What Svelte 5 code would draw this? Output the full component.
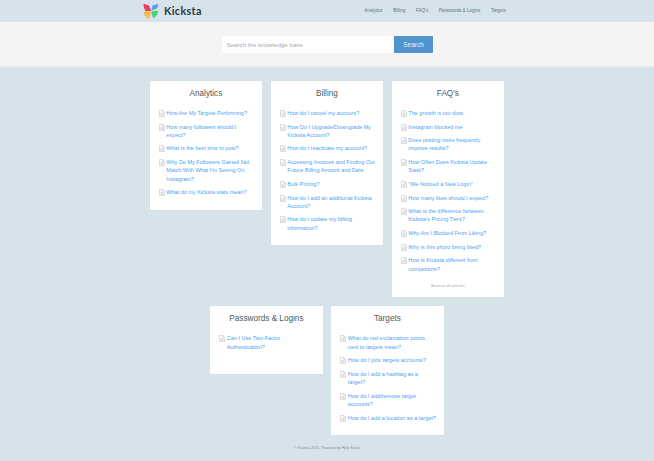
<script>
	const cards = [
		{
			title: 'Analytics',
			items: [
				'How Are My Targets Performing?',
				'How many followers should I expect?',
				'What is the best time to post?',
				"Why Do My Followers Gained Not Match With What I'm Seeing On Instagram?",
				'What do my Kicksta stats mean?'
			]
		},
		{
			title: 'Billing',
			items: [
				'How do I cancel my account?',
				'How Do I Upgrade/Downgrade My Kicksta Account?',
				'How do I reactivate my account?',
				'Accessing Invoices and Finding Out Future Billing Amount and Date',
				'Bulk Pricing?',
				'How do I add an additional Kicksta Account?',
				'How do I update my billing information?'
			]
		},
		{
			title: "FAQ's",
			more: true,
			items: [
				'The growth is too slow.',
				'Instagram blocked me',
				'Does posting more frequently improve results?',
				'How Often Does Kicksta Update Stats?',
				'"We Noticed a New Login"',
				'How many likes should I expect?',
				"What is the difference between Kicksta's Pricing Tiers?",
				'Why Am I Blocked From Liking?',
				'Why is this photo being liked?',
				'How is Kicksta different from competitors?'
			]
		},
		{
			title: 'Passwords & Logins',
			items: ['Can I Use Two-Factor Authentication?'],
			tall: true
		},
		{
			title: 'Targets',
			items: [
				'What do red exclamation points next to targets mean?',
				'How do I pick targets accounts?',
				'How do I add a hashtag as a target?',
				'How do I add/remove target accounts?',
				'How do I add a location as a target?'
			]
		}
	];

	const nav = ['Analytics', 'Billing', "FAQ's", 'Passwords & Logins', 'Targets'];
</script>

<header class="top">
	<div class="top-inner">
		<a class="brand" href="#top">
			<svg width="16" height="16" viewBox="0 0 16 16" aria-hidden="true">
				<path d="M0.5 0.8 L6 2.4 L8.4 8 L2.6 8 C1.2 6 0.5 3.6 0.5 0.8Z" fill="#e8415f" />
				<path d="M15.2 1 L9.6 2.2 L8.4 7.6 L14 5.6 C14.8 4.2 15.2 2.6 15.2 1Z" fill="#5b9bf0" />
				<path d="M0.6 8.4 L7.8 8.4 C7.8 11 7 13.6 5.6 15.6 C2.8 14.6 0.9 11.8 0.6 8.4Z" fill="#f7bb45" />
				<path d="M8.4 8.2 L15.2 7.8 C15 11 13.4 13.8 10.6 15.2 C9.2 13.2 8.4 10.8 8.4 8.2Z" fill="#4fd07a" />
			</svg>
			<span class="brand-name">Kicksta</span>
		</a>
		<nav>
			{#each nav as n}
				<a href="#top">{n}</a>
			{/each}
		</nav>
	</div>
</header>

<section class="search">
	<input type="text" placeholder="Search the knowledge base" />
	<button>Search</button>
</section>

<main class="cards">
	{#each cards as c}
		<article class="card" class:tall={c.tall}>
			<h2>{c.title}</h2>
			<ul>
				{#each c.items as item}
					<li>
						<svg class="doc" width="6" height="7" viewBox="0 0 6 7" aria-hidden="true">
							<path d="M0.5 0.5H3.8L5.5 2.2V6.5H0.5Z M3.8 0.5V2.2H5.5 M1.5 3.3H4.5 M1.5 4.3H4.5 M1.5 5.3H4.5" fill="none" stroke="#c4c4c4" stroke-width="0.6" />
						</svg>
						<a href="#top">{item}</a>
					</li>
				{/each}
			</ul>
			{#if c.more}
				<a class="more" href="#top">Browse all articles</a>
			{/if}
		</article>
	{/each}
</main>

<footer>© Kicksta 2021. Powered by Help Scout</footer>

<style>
	:global(body) {
		margin: 0;
		background: #d6e3ea;
		font-family: 'Liberation Sans', Arial, sans-serif;
	}
	a {
		text-decoration: none;
	}
	.top {
		height: 22px;
	}
	.top-inner {
		width: 363px;
		margin-left: 143px;
		height: 22px;
		display: flex;
		justify-content: space-between;
		align-items: center;
		padding-bottom: 1px;
		box-sizing: border-box;
	}
	.brand {
		display: flex;
		align-items: center;
		gap: 5px;
	}
	.brand-name {
		font-family: Lato, 'Liberation Sans', sans-serif;
		font-size: 10.8px;
		font-weight: 700;
		color: #2b3a42;
		letter-spacing: 0.35px;
	}
	nav {
		display: flex;
		gap: 10.5px;
	}
	nav a {
		font-size: 4.6px;
		color: #5f7684;
	}
	.search {
		height: 45px;
		background: #f4f4f4;
		border-bottom: 1px solid #e3eaee;
		box-sizing: border-box;
		display: flex;
		justify-content: center;
		align-items: center;
		padding-left: 1px;
	}
	.search input {
		width: 172px;
		height: 17px;
		box-sizing: border-box;
		border: 0;
		background: #fff;
		padding: 0 4.5px;
		font: 6.2px 'Liberation Sans', Arial, sans-serif;
		border-radius: 1px 0 0 1px;
	}
	.search input::placeholder {
		color: #aaa;
	}
	.search button {
		width: 39px;
		height: 17px;
		border: 0;
		background: #4f94cd;
		color: #e8f1f8;
		padding: 0;
		font: 6.5px 'Liberation Sans', Arial, sans-serif;
		border-radius: 0 1px 1px 0;
	}
	.cards {
		width: 360px;
		margin: 14px auto 0;
		display: flex;
		flex-wrap: wrap;
		justify-content: center;
		align-items: flex-start;
		gap: 9px 8.7px;
	}
	.card {
		width: 112.3px;
		box-sizing: border-box;
		background: #fff;
		padding: 8px 7.2px 13px 9px;
		box-shadow: 0 0 1px rgba(0, 0, 0, 0.05);
	}
	.card.tall {
		min-height: 68px;
	}
	h2 {
		margin: 0 0 10px;
		padding-right: 2px;
		font-size: 8.2px;
		font-weight: 400;
		line-height: 10px;
		color: #555;
		text-align: center;
	}
	ul {
		list-style: none;
		margin: 0;
		padding: 0;
	}
	li {
		display: flex;
		gap: 1.5px;
		font-size: 5.5px;
		line-height: 8.3px;
		margin-bottom: 5.3px;
	}
	li:last-child {
		margin-bottom: 0;
	}
	.doc {
		flex: none;
		margin-top: 1px;
	}
	li a {
		color: #4aa3f2;
	}
	.more {
		display: block;
		margin: 10px 0 -3.5px;
		padding-right: 2px;
		text-align: center;
		font-size: 4.2px;
		color: #aaa;
	}
	footer {
		margin-top: 11px;
		text-align: center;
		font-size: 3.7px;
		color: #8a8a8a;
	}
</style>
